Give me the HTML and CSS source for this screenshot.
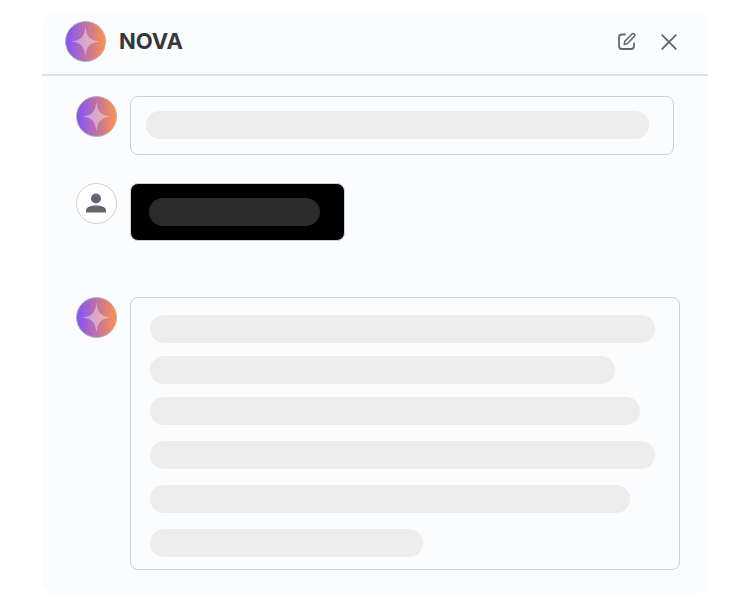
FILE: index.html
```html
<!DOCTYPE html>
<html lang="en">
<head>
    <meta charset="UTF-8">
    <meta name="viewport" content="width=device-width, initial-scale=1.0">
    <title>NOVA</title>
    <link rel="stylesheet" href="styles.css">
</head>
<body>

<!-- Shared shapes -->
<svg class="sprite" width="0" height="0" aria-hidden="true">
    <defs>
        <linearGradient id="novaGradient" x1="0" y1="0" x2="1" y2="0">
            <stop offset="0" stop-color="#8052ff"/>
            <stop offset="1" stop-color="#ff9148"/>
        </linearGradient>
    </defs>
    <symbol id="nova" viewBox="0 0 41 41">
        <circle cx="20.5" cy="20.5" r="20" fill="url(#novaGradient)" stroke="#b9b3bd"/>
        <path d="M20.5 5.5C21.6 16 25 19.4 35 20.5C25 21.6 21.6 25 20.5 35.5C19.4 25 16 21.6 6 20.5C16 19.4 19.4 16 20.5 5.5Z" fill="#ffffff" fill-opacity="0.4"/>
    </symbol>
</svg>

<main class="chat">
    <header class="chat-header">
        <svg class="avatar" aria-hidden="true"><use href="#nova"/></svg>
        <h1>NOVA</h1>
        <button class="icon-button" type="button" aria-label="New chat">
            <svg width="20" height="20" viewBox="0 0 20 20" fill="none" stroke="#63666d" stroke-linecap="round" stroke-linejoin="round">
                <path d="M9 2.5H6Q3 2.5 3 5.5V14Q3 17 6 17H15Q18 17 18 14V11.5" stroke-width="1.8"/>
                <path d="M8.2 12.4L8.8 9.3L16 2Q17.1 1 18.2 2.1Q19.4 3.3 18.4 4.4L11.2 11.7Z" stroke-width="1.5"/>
            </svg>
        </button>
        <button class="icon-button" type="button" aria-label="Close">
            <svg width="20" height="20" viewBox="0 0 20 20" fill="none" stroke="#63666d" stroke-width="1.9" stroke-linecap="round">
                <path d="M3.2 3.2L16.8 16.8M16.8 3.2L3.2 16.8"/>
            </svg>
        </button>
    </header>

    <div class="messages">
        <div class="message greeting">
            <svg class="avatar" aria-hidden="true"><use href="#nova"/></svg>
            <div class="bubble">
                <div class="line"></div>
            </div>
        </div>

        <div class="message user">
            <svg class="avatar" viewBox="0 0 41 41" aria-hidden="true">
                <circle cx="20.5" cy="20.5" r="20" fill="#ffffff" stroke="#cfcfd1"/>
                <circle cx="20" cy="15.5" r="5" fill="#63666f"/>
                <path d="M10 29.5V27.5C10 24.3 14.5 22.5 20 22.5S30 24.3 30 27.5V29.5Z" fill="#63666f"/>
            </svg>
            <div class="bubble">
                <div class="line"></div>
            </div>
        </div>

        <div class="message reply">
            <svg class="avatar" aria-hidden="true"><use href="#nova"/></svg>
            <div class="bubble">
                <div class="paragraph">
                    <div class="line"></div>
                    <div class="line" style="width: 92%"></div>
                    <div class="line" style="width: 97%"></div>
                </div>
                <div class="paragraph loose">
                    <div class="line"></div>
                    <div class="line" style="width: 95%"></div>
                    <div class="line" style="width: 54%"></div>
                </div>
            </div>
        </div>
    </div>
</main>

</body>
</html>
```
FILE: styles.css
```css
* {
    box-sizing: border-box;
}

body {
    margin: 0;
    padding: 10px 42px;
    font-family: Inter, sans-serif;
    background-color: #ffffff;
    color: #34373d;
}

.sprite {
    position: absolute;
}

.chat {
    background: #fbfcfe;
    border-radius: 14px;
}

.chat-header {
    display: flex;
    align-items: center;
    gap: 13px;
    padding: 11px 24px 12px 23px;
    border-bottom: 2px solid #dfe0e3;
}

h1 {
    flex: 1;
    margin: 0;
    padding-bottom: 2px;
    font-size: 22px;
    font-weight: 700;
    line-height: 28px;
}

.avatar {
    flex: none;
    width: 41px;
    height: 41px;
}

.icon-button {
    display: flex;
    padding: 5px;
    border: none;
    background: none;
    cursor: pointer;
}

.messages {
    padding: 20px 28px 24px 34px;
}

.message {
    display: flex;
    align-items: flex-start;
    gap: 13px;
    margin-bottom: 28px;
}

.bubble {
    flex: 1;
    border: 1px solid #cad0d8;
    border-radius: 8px;
    padding: 14px 24px 15px 15px;
}

.line {
    height: 28px;
    border-radius: 14px;
    background: #ededed;
}

.greeting {
    width: 99%;
}

.user {
    margin-bottom: 56px;
}

.user .bubble {
    flex: 0 1 215px;
    padding: 14px 24px 14px 18px;
    background: #000000;
}

.user .line {
    background: #2b2b2b;
}

.reply {
    margin-bottom: 0;
}

.reply .bubble {
    display: flex;
    flex-direction: column;
    gap: 16px;
    padding: 17px 24px 12px 19px;
}

.paragraph {
    display: flex;
    flex-direction: column;
    gap: 13px;
}

.paragraph.loose {
    gap: 16px;
}
```
